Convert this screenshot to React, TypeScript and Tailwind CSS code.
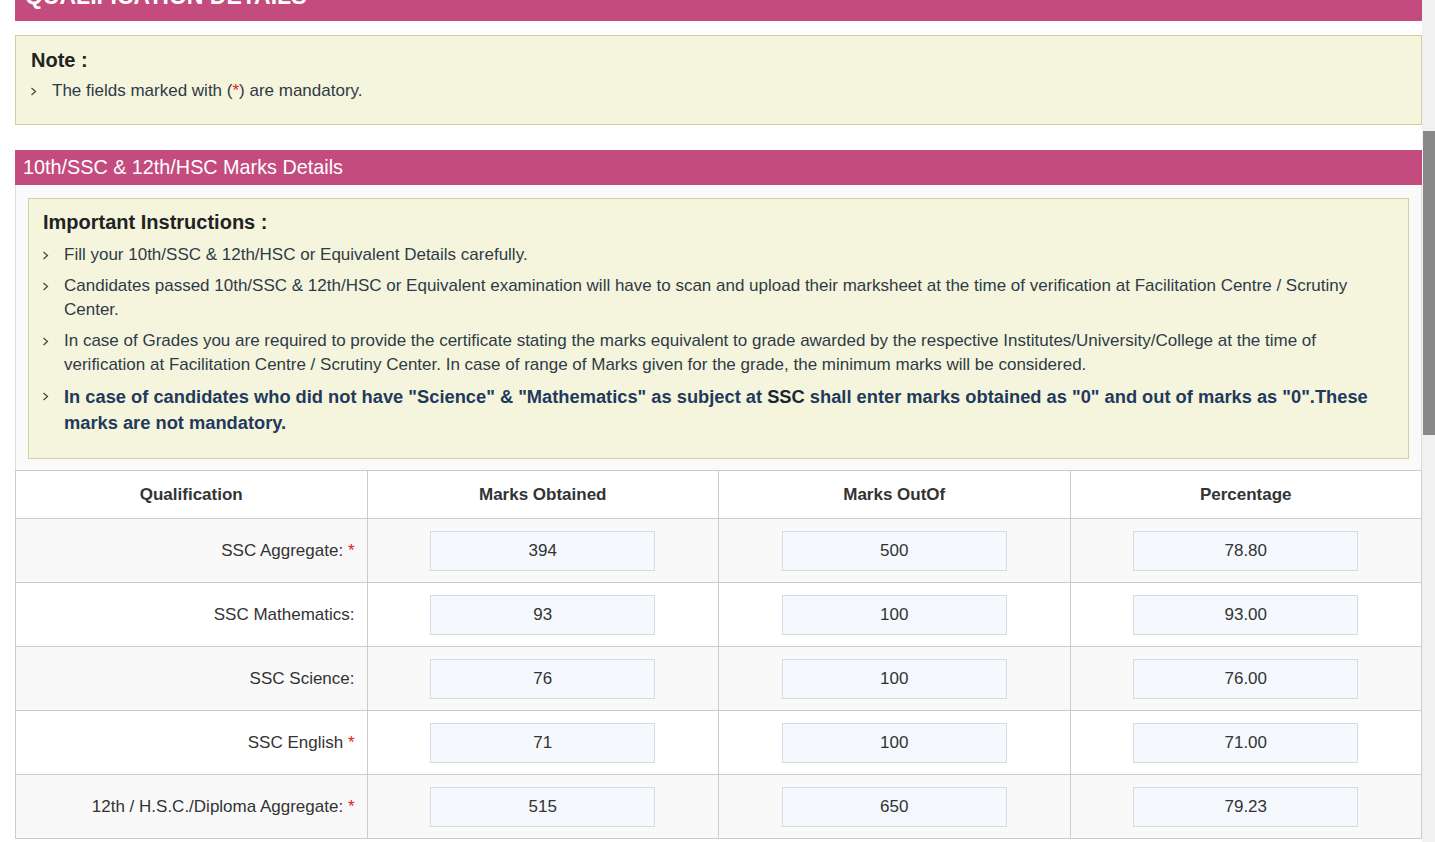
import React from 'react';

const rows = [
  { label: 'SSC Aggregate:', req: true, obtained: '394', outOf: '500', pct: '78.80' },
  { label: 'SSC Mathematics:', req: false, obtained: '93', outOf: '100', pct: '93.00' },
  { label: 'SSC Science:', req: false, obtained: '76', outOf: '100', pct: '76.00' },
  { label: 'SSC English', req: true, obtained: '71', outOf: '100', pct: '71.00' },
  { label: '12th / H.S.C./Diploma Aggregate:', req: true, obtained: '515', outOf: '650', pct: '79.23' },
];

const Chevron = () => (
  <span className="w-[21px] shrink-0 flex items-start pt-[8px]">
    <svg width="7" height="9" viewBox="0 0 7 9" fill="none" className="-ml-[1px]">
      <polyline points="1.5,1 5.5,4.5 1.5,8" stroke="#444" strokeWidth="1.2" />
    </svg>
  </span>
);

const BoxInput = ({ value }: { value: string }) => (
  <input
    readOnly
    value={value}
    className="w-[225px] h-[40px] border border-[#d3dce5] bg-[#f5f9fd] text-center text-[17px] text-[#333] outline-none"
  />
);

const App = () => {
  return (
    <div className="flex h-[842px] overflow-hidden bg-white font-['Liberation_Sans',Arial,sans-serif] text-[#333]">
      <div className="flex-1 pl-[15px]">
        {/* cut-off page title */}
        <div className="-mt-[30px] h-[51px] bg-[#c34b7d] px-[10px] pt-[15px] text-[23px] font-bold leading-none text-white">
          QUALIFICATION DETAILS
        </div>

        {/* Note */}
        <div className="mt-[14px] border border-[#ccd2a0] bg-[#f5f5dd] px-[15px] pt-[13px] pb-[21px]">
          <div className="text-[20px] font-bold leading-[22px] text-[#222]">Note :</div>
          <div className="mt-[8px] flex text-[17px] leading-[24px] text-[#2e3b47]">
            <Chevron />
            <span>
              The fields marked with (<span className="text-[#e02020]">*</span>) are mandatory.
            </span>
          </div>
        </div>

        {/* Marks details section */}
        <div className="mt-[25px] h-[35px] bg-[#c34b7d] px-[8px] text-[19.8px] leading-[35px] text-white">
          10th/SSC &amp; 12th/HSC Marks Details
        </div>
        <div className="bg-[#fafafa]">
          <div className="border-x border-[#dddddd] px-[12px] pt-[13px] pb-[11px]">
            <div className="border border-[#ccd2a0] bg-[#f5f5dd] pl-[14px] pr-[20px] pt-[12px] pb-[22px]">
              <div className="text-[20px] font-bold leading-[22px] text-[#222]">Important Instructions :</div>
              <ul className="mt-[10px] space-y-[7px] text-[17px] leading-[24px] text-[#2e3b47]">
                <li className="flex">
                  <Chevron />
                  <span>Fill your 10th/SSC &amp; 12th/HSC or Equivalent Details carefully.</span>
                </li>
                <li className="flex">
                  <Chevron />
                  <span>
                    Candidates passed 10th/SSC &amp; 12th/HSC or Equivalent examination will have to scan and upload their marksheet at the time of verification at Facilitation Centre / Scrutiny Center.
                  </span>
                </li>
                <li className="flex">
                  <Chevron />
                  <span>
                    In case of Grades you are required to provide the certificate stating the marks equivalent to grade awarded by the respective Institutes/University/College at the time of verification at Facilitation Centre / Scrutiny Center. In case of range of Marks given for the grade, the minimum marks will be considered.
                  </span>
                </li>
                <li className="flex text-[18.3px] font-bold leading-[26px] text-[#1f3a5c]">
                  <Chevron />
                  <span>
                    In case of candidates who did not have "Science" &amp; "Mathematics" as subject at <span className="text-[#1a2633]">SSC</span> shall enter marks obtained as "0" and out of marks as "0".These marks are not mandatory.
                  </span>
                </li>
              </ul>
            </div>
          </div>

          <table className="w-full table-fixed border-collapse text-[17px]">
            <thead>
              <tr className="h-[48px] bg-white">
                {['Qualification', 'Marks Obtained', 'Marks OutOf', 'Percentage'].map(h => (
                  <th key={h} className="border border-[#cccccc] text-center font-bold text-[#333]">{h}</th>
                ))}
              </tr>
            </thead>
            <tbody>
              {rows.map((r, i) => (
                <tr key={r.label} className={`h-[64px] ${i % 2 === 0 ? 'bg-[#f9f9f9]' : 'bg-white'}`}>
                  <td className="border border-[#cccccc] pr-[12px] text-right">
                    {r.label} {r.req && <span className="text-[#e02020]">*</span>}
                  </td>
                  <td className="border border-[#cccccc] text-center"><BoxInput value={r.obtained} /></td>
                  <td className="border border-[#cccccc] text-center"><BoxInput value={r.outOf} /></td>
                  <td className="border border-[#cccccc] text-center"><BoxInput value={r.pct} /></td>
                </tr>
              ))}
            </tbody>
          </table>
        </div>
      </div>

      {/* scrollbar */}
      <div className="w-[13px] shrink-0 bg-[#f1f1f1]">
        <div className="ml-[1px] mt-[131px] h-[304px] bg-[#888888]" />
      </div>
    </div>
  );
};

export default App;
